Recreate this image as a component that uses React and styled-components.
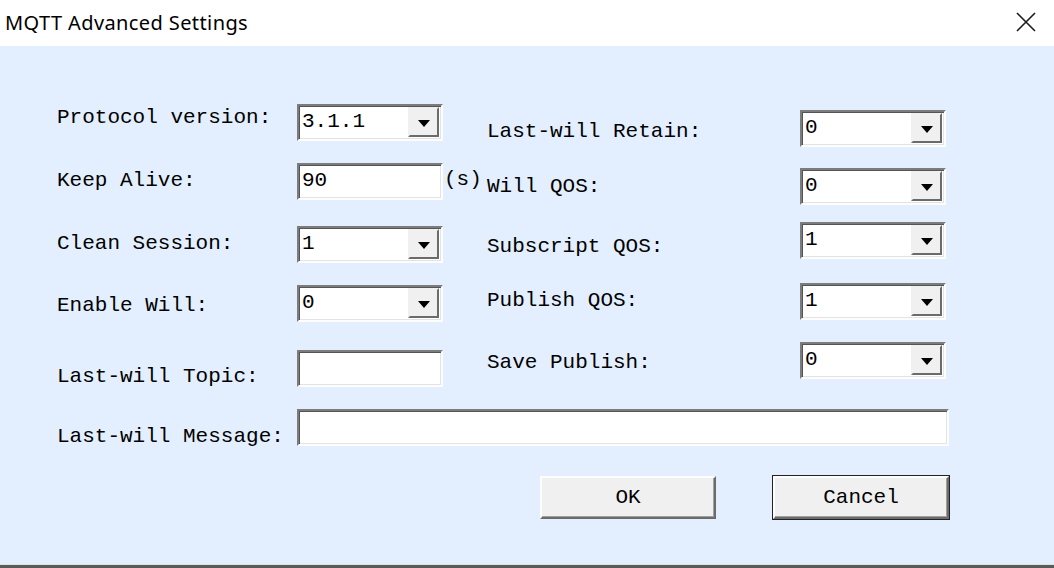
import React from "react";
import styled, { createGlobalStyle } from "styled-components";

const GlobalStyle = createGlobalStyle`
  html, body {
    margin: 0;
    padding: 0;
    background: #fff;
  }
  * {
    box-sizing: border-box;
  }
`;

const Window = styled.div`
  width: 1054px;
  height: 568px;
  display: flex;
  flex-direction: column;
  overflow: hidden;
`;

const TitleBar = styled.div`
  height: 46px;
  background: #fff;
  display: flex;
  align-items: center;
  justify-content: space-between;
  padding: 0 16px 2px 5px;
`;

const Title = styled.div`
  font-family: "Noto Sans", "Open Sans", sans-serif;
  font-size: 20px;
  color: #000;
  letter-spacing: 0.4px;
`;

const CloseButton = styled.div`
  width: 24px;
  height: 24px;
  display: flex;
  align-items: center;
  justify-content: center;
`;

const Body = styled.div`
  flex: 1;
  background: #e3effe;
  border-bottom: 3px solid #5a5a5a;
  box-shadow: inset 0 -1px 0 #d4e6dd;
  padding: 0 0 0 57px;
  font-family: "Liberation Mono", "DejaVu Sans Mono", monospace;
  font-size: 21px;
  color: #000;
`;

const Columns = styled.div`
  display: flex;
  align-items: flex-start;
`;

const Column = styled.div`
  display: flex;
  flex-direction: column;
  width: ${(p) => p.$width}px;
  padding-top: ${(p) => p.$top}px;
`;

const Row = styled.div`
  display: flex;
  align-items: flex-start;
  margin-top: ${(p) => p.$gap || 0}px;
`;

const Label = styled.div`
  width: ${(p) => p.$width}px;
  line-height: 22px;
  margin-top: ${(p) => p.$dy}px;
  white-space: pre;
`;

const Unit = styled.div`
  line-height: 22px;
  margin-top: 6px;
  margin-left: 1px;
`;

const Sunken = styled.div`
  width: ${(p) => p.$width || 146}px;
  height: 37px;
  background: #fff;
  border: 2px solid;
  border-color: #7c7c7c #fdfdfd #fdfdfd #7c7c7c;
  box-shadow: inset 1px 1px 0 #555, inset -1px -1px 0 #e3e3e3;
  display: flex;
  align-items: stretch;
  padding: 1px 2px 2px 1px;
`;

const Value = styled.div`
  flex: 1;
  padding: 4px 0 0 2px;
  line-height: 22px;
  white-space: pre;
`;

const DropButton = styled.div`
  width: 31px;
  background: #f0f0f0;
  border: 2px solid;
  border-color: #f0f0f0 #6b6b6b #6b6b6b #f0f0f0;
  display: flex;
  align-items: center;
  justify-content: center;
`;

const Arrow = styled.div`
  width: 0;
  height: 0;
  border-left: 6px solid transparent;
  border-right: 6px solid transparent;
  border-top: 7px solid #000;
  margin-top: 2px;
`;

const MessageRow = styled.div`
  display: flex;
  align-items: flex-start;
  margin-top: 21px;
`;

const Buttons = styled.div`
  display: flex;
  gap: 57px;
  margin-top: 28px;
  padding-left: 483px;
`;

const PushButton = styled.div`
  width: 176px;
  height: 43px;
  background: #f0f0f0;
  border: 2px solid;
  border-color: #fdfdfd #6b6b6b #6b6b6b #fdfdfd;
  box-shadow: ${(p) =>
    p.$default ? "0 0 0 1px #222, inset -1px -1px 0 #a0a0a0" : "inset -1px -1px 0 #a0a0a0"};
  display: flex;
  align-items: center;
  justify-content: center;
  line-height: 22px;
`;

function Combo({ value }) {
  return (
    <Sunken>
      <Value>{value}</Value>
      <DropButton>
        <Arrow />
      </DropButton>
    </Sunken>
  );
}

function Field({ value = "", width }) {
  return (
    <Sunken $width={width}>
      <Value>{value}</Value>
    </Sunken>
  );
}

export default function App() {
  return (
    <Window>
      <GlobalStyle />
      <TitleBar>
        <Title>MQTT Advanced Settings</Title>
        <CloseButton>
          <svg width="22" height="22" viewBox="0 0 22 22">
            <path d="M2 2 L20 20 M20 2 L2 20" stroke="#1a1a1a" strokeWidth="1.6" />
          </svg>
        </CloseButton>
      </TitleBar>
      <Body>
        <Columns>
          <Column $width={430} $top={58}>
            <Row>
              <Label $width={240} $dy={3}>Protocol version:</Label>
              <Combo value="3.1.1" />
            </Row>
            <Row $gap={22}>
              <Label $width={240} $dy={7}>Keep Alive:</Label>
              <Field value="90" />
              <Unit>(s)</Unit>
            </Row>
            <Row $gap={26}>
              <Label $width={240} $dy={7}>Clean Session:</Label>
              <Combo value="1" />
            </Row>
            <Row $gap={22}>
              <Label $width={240} $dy={10}>Enable Will:</Label>
              <Combo value="0" />
            </Row>
            <Row $gap={28}>
              <Label $width={240} $dy={16}>Last-will Topic:</Label>
              <Field />
            </Row>
          </Column>
          <Column $width={460} $top={64}>
            <Row>
              <Label $width={313} $dy={11}>Last-will Retain:</Label>
              <Combo value="0" />
            </Row>
            <Row $gap={21}>
              <Label $width={313} $dy={8}>Will QOS:</Label>
              <Combo value="0" />
            </Row>
            <Row $gap={17}>
              <Label $width={313} $dy={14}>Subscript QOS:</Label>
              <Combo value="1" />
            </Row>
            <Row $gap={24}>
              <Label $width={313} $dy={7}>Publish QOS:</Label>
              <Combo value="1" />
            </Row>
            <Row $gap={22}>
              <Label $width={313} $dy={10}>Save Publish:</Label>
              <Combo value="0" />
            </Row>
          </Column>
        </Columns>
        <MessageRow>
          <Label $width={240} $dy={17}>Last-will Message:</Label>
          <Field width={652} />
        </MessageRow>
        <Buttons>
          <PushButton>OK</PushButton>
          <PushButton $default>Cancel</PushButton>
        </Buttons>
      </Body>
    </Window>
  );
}
